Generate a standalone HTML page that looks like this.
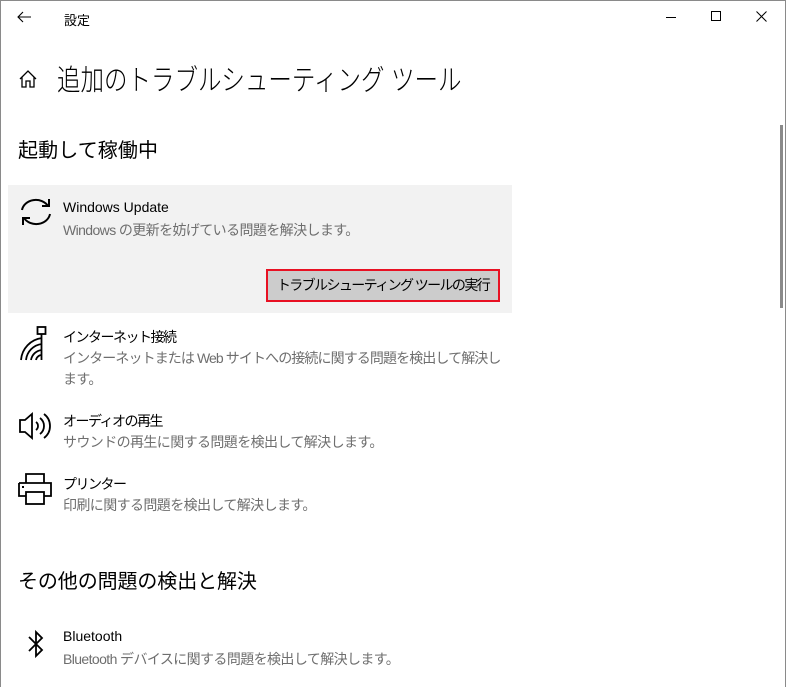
<!DOCTYPE html>
<html><head><meta charset="utf-8"><style>
*{margin:0;padding:0;box-sizing:border-box}
body{width:786px;height:687px;background:#fff;font-family:"Liberation Sans","Noto Sans CJK JP",sans-serif;position:relative;overflow:hidden;color:#000}
.frame{position:absolute;left:0;top:0;width:786px;height:687px;border:1px solid #8a8a8a;border-bottom:none}
.a{position:absolute;white-space:nowrap}
.t{font-size:14px;color:#000;letter-spacing:-0.8px}
.s{font-size:14px;color:#6e6e6e;letter-spacing:-0.6px}
</style></head><body>
<div class="frame"></div>
<svg class="a" style="left:16px;top:10px" width="16" height="14" viewBox="0 0 16 14"><path d="M15 7H2M7 2L2 7l5 5" stroke="#000" stroke-width="1.1" fill="none"/></svg>
<div class="a" style="left:64px;top:10px;font-size:13px">設定</div>
<div class="a" style="left:666px;top:17px;width:10px;height:1px;background:#000"></div>
<div class="a" style="left:711px;top:11px;width:10px;height:10px;border:1px solid #000"></div>
<svg class="a" style="left:756px;top:11px" width="11" height="11"><path d="M0.5 0.5L10.5 10.5M10.5 0.5L0.5 10.5" stroke="#000" stroke-width="1"/></svg>
<svg class="a" style="left:18px;top:69px" width="20" height="20" viewBox="0 0 20 20"><path d="M2 10L10 2l8 8M4 8v10h4v-6h4v6h4V8" stroke="#000" stroke-width="1.3" fill="none"/></svg>
<div class="a" style="left:57px;top:57px;font-size:29px;font-weight:300;transform:scaleX(0.81);transform-origin:left">追加のトラブルシューティング ツール</div>
<div class="a" style="left:18px;top:134px;font-size:20px;letter-spacing:0.1px">起動して稼働中</div>
<div class="a" style="left:8px;top:185px;width:504px;height:128px;background:#f2f2f2"></div>
<svg class="a" style="left:18px;top:194px" width="36" height="36" viewBox="0 0 36 36"><path d="M4 16A14 12 0 0 1 30 12M32 20A14 12 0 0 1 6 24" stroke="#000" stroke-width="2" fill="none"/><path d="M24 12h7V5M12 24H5v7" stroke="#000" stroke-width="2" fill="none"/></svg>
<div class="a t" style="left:63px;top:199px;letter-spacing:0">Windows Update</div>
<div class="a s" style="left:63px;top:220px">Windows の更新を妨げている問題を解決します。</div>
<div class="a" style="left:266px;top:269px;width:234px;height:33px;background:#cccccc;border:2px solid #e81123;font-size:14px;text-align:center;line-height:29px;letter-spacing:-1.6px">トラブルシューティング ツールの実行</div>
<svg class="a" style="left:18px;top:324px" width="36" height="38" viewBox="0 0 36 38"><path d="M3 36A24 24 0 0 1 24 14M8 36A18 18 0 0 1 24 20M13 36A12 12 0 0 1 24 26M18 36A6 6 0 0 1 24 31" stroke="#000" stroke-width="1.8" fill="none"/><rect x="19.5" y="3" width="8" height="7" fill="none" stroke="#000" stroke-width="1.8"/><path d="M23.5 10V36" stroke="#000" stroke-width="1.8"/></svg>
<div class="a t" style="left:63px;top:327px;letter-spacing:-1.5px">インターネット接続</div>
<div class="a s" style="left:63px;top:348px;letter-spacing:-0.9px">インターネットまたは Web サイトへの接続に関する問題を検出して解決し</div>
<div class="a s" style="left:63px;top:369px">ます。</div>
<svg class="a" style="left:18px;top:411px" width="36" height="30" viewBox="0 0 36 30"><path d="M2 9h5l7-6v24l-7-6H2z" stroke="#000" stroke-width="1.8" fill="none"/><path d="M18 11a5 5 0 0 1 0 8M22 7a10 10 0 0 1 0 16M26 3a15 15 0 0 1 0 24" stroke="#000" stroke-width="1.8" fill="none"/></svg>
<div class="a t" style="left:63px;top:411px;letter-spacing:-1.5px">オーディオの再生</div>
<div class="a s" style="left:63px;top:432px">サウンドの再生に関する問題を検出して解決します。</div>
<svg class="a" style="left:18px;top:472px" width="34" height="34" viewBox="0 0 34 34"><path d="M8 11V2h18v9M1 11h32v13h-7M8 24H1V11" stroke="#000" stroke-width="1.8" fill="none"/><rect x="8" y="20" width="18" height="12" fill="none" stroke="#000" stroke-width="1.8"/><rect x="4" y="14" width="2" height="2" fill="#000"/></svg>
<div class="a t" style="left:63px;top:474px;letter-spacing:-1.5px">プリンター</div>
<div class="a s" style="left:63px;top:495px">印刷に関する問題を検出して解決します。</div>
<div class="a" style="left:18px;top:565px;font-size:20px;letter-spacing:-0.1px">その他の問題の検出と解決</div>
<svg class="a" style="left:27px;top:629px" width="18" height="30" viewBox="0 0 18 30"><path d="M2 8l13 13-6 6V3l6 6L2 22" stroke="#000" stroke-width="1.8" fill="none"/></svg>
<div class="a t" style="left:63px;top:628px;letter-spacing:0">Bluetooth</div>
<div class="a s" style="left:63px;top:649px">Bluetooth デバイスに関する問題を検出して解決します。</div>
<div class="a" style="left:780px;top:125px;width:3px;height:183px;background:#8a8a8a"></div>
</body></html>
